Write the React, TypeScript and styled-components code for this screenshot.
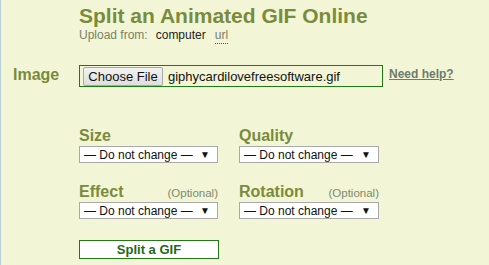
import React from "react";
import styled, { createGlobalStyle } from "styled-components";

const Global = createGlobalStyle`
  html, body { margin: 0; padding: 0; background: #f3f6d6; }
  body { font-family: Arial, "Liberation Sans", sans-serif; }
`;

const Page = styled.div`
  width: 489px;
  height: 265px;
  box-sizing: border-box;
  border-left: 1px solid #b6d0de;
  background: #f3f6d6;
  overflow: hidden;
`;

const Header = styled.div`
  padding: 4px 0 0 78px;
`;

const Title = styled.h1`
  margin: 0;
  font-size: 21px;
  line-height: 24px;
  font-weight: bold;
  color: #7a8b3c;
`;

const UploadLine = styled.div`
  display: flex;
  gap: 8px;
  font-size: 12px;
  line-height: 15px;
  color: #7a8066;
`;

const Source = styled.span<{ $link?: boolean }>`
  color: ${(p) => (p.$link ? "#7a8066" : "#222")};
  border-bottom: ${(p) => (p.$link ? "1px dotted #555" : "none")};
  margin-left: ${(p) => (p.$link ? "1px" : "0")};
`;

const ImageRow = styled.div`
  display: flex;
  align-items: flex-start;
  margin-top: 21px;
  padding-left: 12px;
`;

const RowLabel = styled.div`
  width: 66px;
  font-size: 16px;
  line-height: 18px;
  font-weight: bold;
  color: #7a8b3c;
  padding-top: 1px;
`;

const FileBox = styled.div`
  width: 304px;
  height: 22px;
  box-sizing: border-box;
  border: 1px solid #1f7a14;
  display: flex;
  align-items: center;
  gap: 5px;
  padding-left: 3px;
`;

const ChooseButton = styled.button`
  height: 19px;
  width: 80px;
  padding: 0;
  box-sizing: border-box;
  border: 1px solid #a9a9a9;
  border-radius: 2px;
  background: linear-gradient(#f2f2f2, #dedede);
  font-family: Arial, "Liberation Sans", sans-serif;
  font-size: 13px;
  color: #111;
`;

const FileName = styled.span`
  font-size: 13px;
  color: #111;
`;

const Help = styled.a`
  margin-left: 6px;
  margin-top: 2px;
  font-size: 12px;
  line-height: 15px;
  font-weight: bold;
  color: #6e7a6c;
  text-decoration: underline;
`;

const Grid = styled.div`
  display: grid;
  grid-template-columns: 139px 140px;
  column-gap: 21px;
  row-gap: 20px;
  padding-left: 78px;
  margin-top: 40px;
`;

const Field = styled.div`
  display: flex;
  flex-direction: column;
  gap: 1px;
`;

const LabelRow = styled.div`
  display: flex;
  justify-content: space-between;
  align-items: baseline;
  height: 18px;
`;

const FieldLabel = styled.span`
  font-size: 16px;
  line-height: 18px;
  font-weight: bold;
  color: #7a8b3c;
`;

const Optional = styled.span`
  font-size: 11.5px;
  line-height: 14px;
  color: #7d8a6e;
`;

const Select = styled.div`
  height: 17px;
  box-sizing: border-box;
  border: 1px solid #a9a9a9;
  background: #fff;
  display: flex;
  align-items: center;
  justify-content: space-between;
  padding: 0 7px 0 4px;
  font-size: 12px;
  color: #111;
  white-space: nowrap;
`;

const Arrow = styled.span`
  font-size: 10px;
  line-height: 1;
  color: #111;
`;

const SubmitRow = styled.div`
  padding-left: 78px;
  margin-top: 21px;
`;

const Submit = styled.button`
  width: 140px;
  height: 19px;
  box-sizing: border-box;
  border: 1px solid #1f7a14;
  background: #fff;
  padding: 0;
  font-family: Arial, "Liberation Sans", sans-serif;
  font-size: 13px;
  font-weight: bold;
  color: #1e6a14;
`;

const fields = [
  { label: "Size", optional: false },
  { label: "Quality", optional: false },
  { label: "Effect", optional: true },
  { label: "Rotation", optional: true },
];

export default function App() {
  return (
    <Page>
      <Global />
      <Header>
        <Title>Split an Animated GIF Online</Title>
        <UploadLine>
          <span>Upload from:</span>
          <Source>computer</Source>
          <Source $link>url</Source>
        </UploadLine>
      </Header>
      <ImageRow>
        <RowLabel>Image</RowLabel>
        <FileBox>
          <ChooseButton>Choose File</ChooseButton>
          <FileName>giphycardilovefreesoftware.gif</FileName>
        </FileBox>
        <Help>Need help?</Help>
      </ImageRow>
      <Grid>
        {fields.map((f) => (
          <Field key={f.label}>
            <LabelRow>
              <FieldLabel>{f.label}</FieldLabel>
              {f.optional && <Optional>(Optional)</Optional>}
            </LabelRow>
            <Select>
              <span>— Do not change —</span>
              <Arrow>▼</Arrow>
            </Select>
          </Field>
        ))}
      </Grid>
      <SubmitRow>
        <Submit>Split a GIF</Submit>
      </SubmitRow>
    </Page>
  );
}
